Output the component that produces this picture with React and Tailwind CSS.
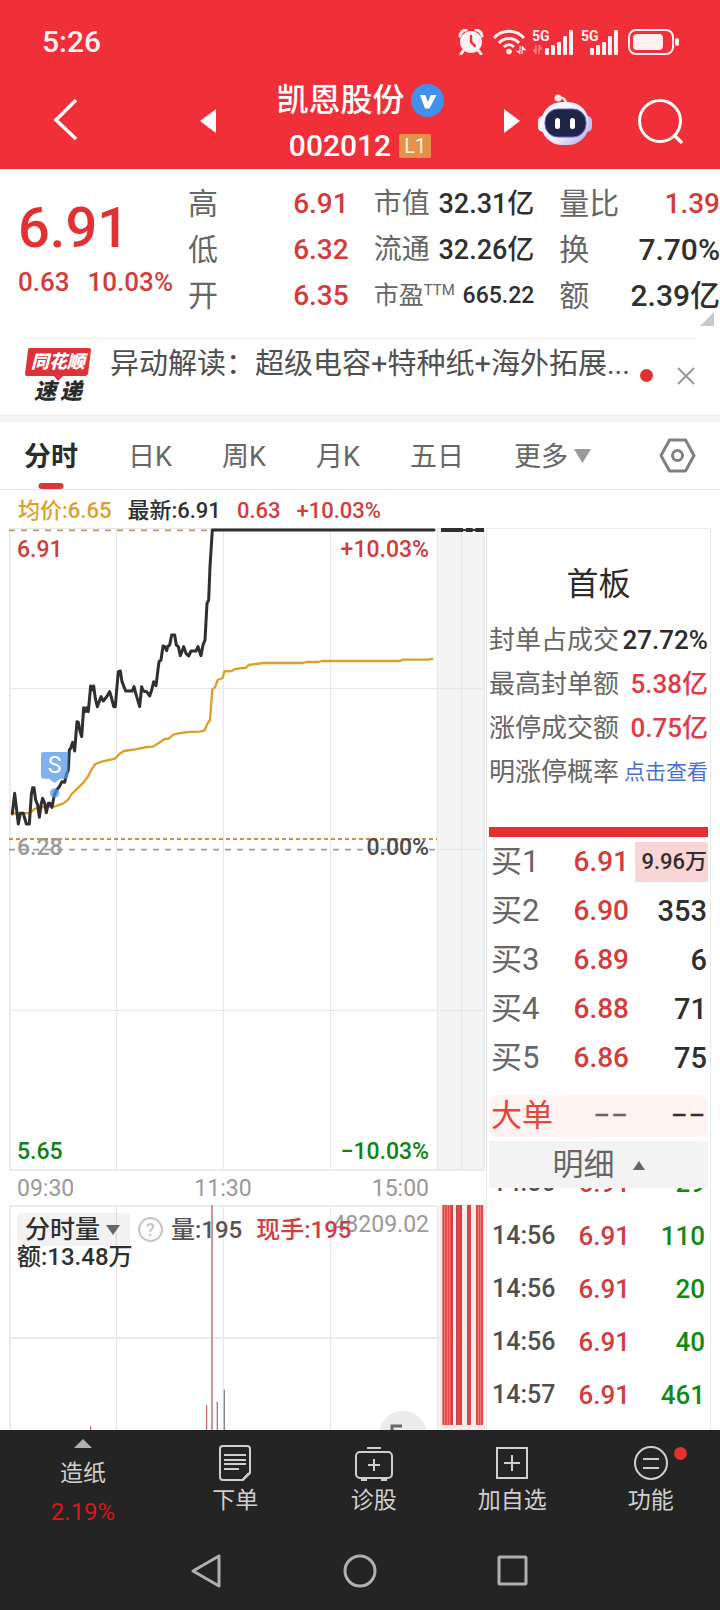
import React from "react";

const PRICE_LINE =
  "37,880 44,820 55,912 61,880 70,880 79,912 88,912 94,825 98,803 102,803 107,840 113,855 118,892 124,850 128,835 134,850 139,878 145,850 150,850 156,862 163,825 170,810 178,800 186,785 194,787 199,765 205,750 208,690 212,685 218,667 224,693 231,605 235,607 239,630 245,650 251,563 256,575 260,563 265,575 272,498 276,510 281,498 286,535 292,560 303,530 310,543 320,530 329,515 335,535 341,560 346,560 350,510 355,455 361,453 366,485 377,513 397,513 402,500 410,530 419,560 425,500 430,513 440,515 449,528 455,510 461,485 468,497 477,425 483,420 489,378 494,380 500,392 503,380 509,375 515,345 524,345 529,375 535,380 541,407 551,380 558,400 566,408 573,393 588,393 594,380 603,407 609,375 615,360 621,250 626,240 630,140 637,30 1302,30";

const AVG_LINE =
  "34,886 44,880 90,879 105,866 125,862 165,859 190,850 205,838 215,822 232,806 250,788 265,768 275,748 286,732 305,725 345,716 358,702 372,693 405,688 440,681 458,680 480,667 493,657 507,656 518,645 535,640 565,636 598,635 613,632 622,612 630,600 637,508 645,502 653,480 668,474 673,454 695,453 705,447 738,443 746,435 790,429 910,429 920,426 955,426 965,423 1200,423 1210,419 1285,419 1300,416";

const stats = [
  [
    { label: "高", value: "6.91", up: true },
    { label: "低", value: "6.32", up: true },
    { label: "开", value: "6.35", up: true },
  ],
  [
    { label: "市值", value: "32.31亿", medium: true },
    { label: "流通", value: "32.26亿", medium: true },
    { label: "市盈", sup: "TTM", value: "665.22", small: true },
  ],
  [
    { label: "量比", value: "1.39", up: true },
    { label: "换", value: "7.70%" },
    { label: "额", value: "2.39亿" },
  ],
];

const tabs = ["日K", "周K", "月K", "五日"];

const boardRows = [
  { label: "封单占成交", value: "27.72%", color: "text-[#2b2b2b]" },
  { label: "最高封单额", value: "5.38亿", color: "text-[#df3a45]" },
  { label: "涨停成交额", value: "0.75亿", color: "text-[#df3a45]" },
];

const bids = [
  ["买1", "6.91", "9.96万"],
  ["买2", "6.90", "353"],
  ["买3", "6.89", "6"],
  ["买4", "6.88", "71"],
  ["买5", "6.86", "75"],
];

const ticks = [
  ["14:56", "6.91", "29"],
  ["14:56", "6.91", "110"],
  ["14:56", "6.91", "20"],
  ["14:56", "6.91", "40"],
  ["14:57", "6.91", "461"],
];

const getValueSize = (s) => {
  if (s.small) return "text-[23px]";
  if (s.medium) return "text-[27px]";
  if (s.up) return "text-[28px]";
  return "text-[30px]";
};

const getLabelSize = (s) => {
  if (s.small) return "flex text-[25px]";
  if (s.medium) return "text-[28px]";
  return "text-[30px]";
};

function SignalIcon({ data }) {
  return (
    <svg width="43" height="28" viewBox="0 0 43 28" fill="#fff0f1">
      <text
        x="0"
        y="13"
        fontSize="14"
        fontWeight="700"
        fontFamily="Roboto, sans-serif"
      >
        5G
      </text>
      {data && (
        <path
          d="M4 17v9l-3-4h3zM7 26v-9l3 4H7z"
          fill="#ff8087"
          stroke="#ff8087"
          strokeWidth="1"
        />
      )}
      <rect x={data ? 13 : 9} y="20" width="4" height="7" rx="1" />
      <rect x={data ? 19 : 15} y="17" width="4" height="10" rx="1" />
      <rect x={data ? 25 : 21} y="14" width="4" height="13" rx="1" />
      <rect x={data ? 31 : 27} y="8" width="4" height="19" rx="1" />
      <rect x={data ? 37 : 33} y="2" width="4" height="25" rx="1" />
    </svg>
  );
}

function StatusBar() {
  return (
    <div className="flex h-[76px] items-center justify-between pt-2 pr-[40px] pl-[42px]">
      <span className="text-[30px] leading-8 font-medium text-[#fff0f1]">
        5:26
      </span>
      <div className="flex items-center">
        {/* alarm */}
        <svg width="26" height="26" viewBox="0 0 26 26" fill="#fff0f1">
          <circle cx="13" cy="13" r="11" />
          <path
            d="M2 7C2 4 5 1 8 1M24 7C24 4 21 1 18 1M5 22l-2 3M21 22l2 3"
            stroke="#fff0f1"
            strokeWidth="3"
            fill="none"
            strokeLinecap="round"
          />
          <path
            d="M13 7v6l4 4"
            stroke="#f12f38"
            strokeWidth="2.4"
            fill="none"
            strokeLinecap="round"
          />
        </svg>
        {/* wifi */}
        <svg
          className="ml-[9px]"
          width="34"
          height="26"
          viewBox="0 0 34 26"
          fill="none"
          stroke="#fff0f1"
          strokeWidth="3"
        >
          <path d="M1 9C9 0 23 0 31 9" />
          <path d="M6 14c5.500-6 14.500-6 20 0" />
          <path d="M11 18c3-3 7-3 10 0" />
          <circle cx="16" cy="22.500" r="2.800" fill="#fff0f1" stroke="none" />
          <path
            d="M27 17v8l-4-3h4zM29 25v-8l4 4h-4z"
            fill="#fff0f1"
            strokeWidth="0.600"
          />
        </svg>
        <div className="ml-[5px]">
          <SignalIcon data />
        </div>
        <div className="ml-1.5">
          <SignalIcon />
        </div>
        <svg className="ml-1" width="52" height="28" viewBox="0 0 52 28">
          <rect
            x="1"
            y="2"
            width="44"
            height="24"
            rx="7"
            fill="none"
            stroke="#fff0f1"
            strokeWidth="2"
          />
          <rect x="5" y="6" width="30" height="16" rx="4" fill="#fff0f1" />
          <rect x="47" y="10" width="4" height="8" rx="2" fill="#fff0f1" />
        </svg>
      </div>
    </div>
  );
}

function Header() {
  return (
    <header className="bg-[#f12f38] text-white">
      <StatusBar />
      <div className="flex h-[93px] items-start">
        <button
          aria-label="返回"
          className="flex h-[88px] w-[200px] items-center pl-[52px]"
        >
          <svg width="26" height="44" viewBox="0 0 26 44" fill="none">
            <path d="M24 2L4 22l20 19" stroke="#fff" strokeWidth="3.500" />
          </svg>
        </button>
        <button aria-label="上一只" className="flex h-[90px] items-center">
          <svg width="16" height="24" viewBox="0 0 16 24">
            <path d="M16 0v24L0 12z" fill="#fff" />
          </svg>
        </button>
        <div className="flex flex-1 flex-col items-center pt-px leading-[46px]">
          <h1 className="flex items-center gap-[6px] text-[32px] font-medium">
            凯恩股份
            <svg width="33" height="33" viewBox="0 0 33 33">
              <circle cx="16.500" cy="16.500" r="16.500" fill="#4390ec" />
              <path
                d="M9 11h5.500l2.200 7 3.300-7h5.500L18.500 24.500h-4.500z"
                fill="#fff"
              />
            </svg>
          </h1>
          <div className="flex items-center gap-2 text-[30px] font-medium">
            002012
            <span className="h-6 w-8 rounded-xs bg-[#e5914a] text-center text-[20px] leading-6 font-normal text-[#fff3e2]">
              L1
            </span>
          </div>
        </div>
        <button aria-label="下一只" className="flex h-[90px] items-center">
          <svg width="16" height="24" viewBox="0 0 16 24">
            <path d="M0 0v24l16-12z" fill="#fff" />
          </svg>
        </button>
        <button
          aria-label="智能助手"
          className="ml-[18px] flex h-[88px] items-center"
        >
          <svg width="54" height="52" viewBox="0 0 54 52">
            <defs>
              <linearGradient id="shell" x1="0" y1="0" x2="1" y2="1">
                <stop offset="0" stopColor="#ffffff" />
                <stop offset="0.600" stopColor="#f0e8fa" />
                <stop offset="1" stopColor="#a9a8ea" />
              </linearGradient>
            </defs>
            <path
              d="M20 4c5-1 8 1 8 6"
              stroke="#fbdfe6"
              strokeWidth="2.500"
              fill="none"
            />
            <circle cx="20" cy="4" r="3.500" fill="#ffe6ea" />
            <rect x="0" y="22" width="10" height="16" rx="5" fill="#f6eefa" />
            <rect x="44" y="22" width="10" height="16" rx="5" fill="#c3c0f0" />
            <rect
              x="3"
              y="8"
              width="48"
              height="43"
              rx="21"
              fill="url(#shell)"
            />
            <rect
              x="7"
              y="15"
              width="41"
              height="28"
              rx="13"
              fill="#1e2546"
              stroke="#6d5be0"
              strokeWidth="1"
            />
            <rect x="17" y="24" width="5" height="11" rx="2.500" fill="#fff" />
            <rect x="32" y="24" width="5" height="11" rx="2.500" fill="#fff" />
          </svg>
        </button>
        <button
          aria-label="搜索"
          className="mr-[37px] ml-[46px] flex h-[90px] items-center"
        >
          <svg
            width="45"
            height="45"
            viewBox="0 0 45 45"
            fill="none"
            stroke="#fff"
            strokeWidth="3"
          >
            <circle cx="22" cy="22" r="20.500" />
            <path d="M36 36l8 8" strokeWidth="3.500" />
          </svg>
        </button>
      </div>
    </header>
  );
}

function Quote() {
  return (
    <section className="relative grid grid-cols-[145px_1fr_1fr_1fr] gap-[25px] pt-3 pb-[19px] pl-[18px]">
      <div className="pt-[14px] font-medium whitespace-nowrap text-[#d33b3b]">
        <div className="text-[56px] leading-[66px] text-[#e13132]">6.91</div>
        <div className="flex gap-[18px] text-[26px] leading-[42px]">
          <span>0.63</span>
          <span>10.03%</span>
        </div>
      </div>
      {stats.map((col, i) => (
        <dl key={i} className="leading-[46px] whitespace-nowrap">
          {col.map((s) => (
            <div key={s.label} className="flex h-[46px] justify-between">
              <dt className={`text-[#666] ${getLabelSize(s)}`}>
                {s.label}
                {s.sup && (
                  <span className="text-[15px] leading-[34px]">{s.sup}</span>
                )}
              </dt>
              <dd
                className={`font-medium ${getValueSize(s)} ${
                  s.up ? "text-[#d33b3b]" : "text-[#2f2f2f]"
                }`}
              >
                {s.value}
              </dd>
            </div>
          ))}
        </dl>
      ))}
      <svg
        className="absolute right-[6px] bottom-3"
        width="14"
        height="14"
        viewBox="0 0 14 14"
      >
        <path d="M14 0v14H0z" fill="#c8c8c8" />
      </svg>
    </section>
  );
}

function NewsBar() {
  return (
    <section className="mx-[25px] flex h-[76px] items-start border-t border-[#ebebeb]">
      <div className="mt-[9px] w-[66px] shrink-0">
        <div className="relative">
          <svg
            className="block"
            width="66"
            height="33"
            viewBox="0 0 66 33"
            aria-hidden="true"
          >
            <path
              d="M5 0h59q2 0 2 2l-3 24q-1 2-3 2H38l-5 5-4-5H2q-2 0-2-2L3 2q0-2 2-2z"
              fill="#e13136"
            />
          </svg>
          <span className="absolute inset-x-0 top-0 text-center text-[18px] leading-7 font-black text-white italic">
            同花顺
          </span>
        </div>
        <div className="flex justify-center gap-1 text-[22px] leading-[22px] font-black text-[#2b2b2b] italic">
          <span>速</span>
          <span>递</span>
        </div>
      </div>
      <p className="ml-[19px] min-w-0 flex-1 text-[29px] leading-[51px] whitespace-nowrap text-[#4f4f4f]">
        异动解读：超级电容+特种纸+海外拓展...
      </p>
      <span className="mt-[30px] ml-2 size-[13px] shrink-0 rounded-full bg-[#e5302f]" />
      <button aria-label="关闭" className="mt-[28px] ml-6 shrink-0">
        <svg width="18" height="18" viewBox="0 0 18 18">
          <path d="M1 1l16 16M17 1L1 17" stroke="#999" strokeWidth="2" />
        </svg>
      </button>
    </section>
  );
}

function Tabs() {
  return (
    <nav className="flex h-[68px] items-center justify-between border-b border-[#e6e6e6] pr-6 pl-6 text-[27px] text-[#666]">
      <button className="relative h-full pt-[3px] font-bold text-[#2b2b2b]">
        分时
        <span className="absolute bottom-0 left-1/2 h-[6px] w-[25px] -translate-x-1/2 rounded-full bg-[#d93737]" />
      </button>
      {tabs.map((t) => (
        <button key={t} className="h-full pt-[3px]">
          {t}
        </button>
      ))}
      <button className="flex h-full items-center gap-[6px] pt-[3px]">
        更多
        <svg
          className="-mt-[3px]"
          width="17"
          height="14"
          viewBox="0 0 17 14"
        >
          <path d="M0 0h17L8.500 14z" fill="#999" />
        </svg>
      </button>
      <button aria-label="设置" className="ml-[18px]">
        <svg
          width="37"
          height="35"
          viewBox="0 0 37 35"
          fill="none"
          stroke="#808080"
          strokeWidth="3"
          strokeLinejoin="round"
        >
          <path d="M10.500 2h16l8.500 15.500L26.500 33h-16L2 17.500z" />
          <circle cx="18.500" cy="17.500" r="5" />
        </svg>
      </button>
    </nav>
  );
}

function PriceChart() {
  return (
    <div className="relative text-[23px] leading-7 font-medium">
      <svg
        className="block h-[643px] w-full"
        viewBox="27 24 1428 1929"
        preserveAspectRatio="none"
        fill="none"
      >
        <rect x="1318" y="24" width="137" height="1929" fill="#f4f4f4" />
        {/* grid */}
        <g stroke="#e3e3e3" strokeWidth="3">
          <path d="M349 24v1929M670 24v1929M992 24v1929M1385 24v1929" />
          <path d="M27 506h1428M1315 988h140M27 1471h1428" />
        </g>
        <g stroke="#ebebeb" strokeWidth="6">
          <path d="M30 24v1929M1313 24v1929M1453 24v1929M27 1950h1428" />
        </g>
        <path d="M27 26h1428" stroke="#e6e6e6" strokeWidth="4" />
        <path
          d="M27 31h610"
          stroke="#b89d72"
          strokeWidth="5"
          strokeDasharray="18 18"
        />
        <path
          d="M27 957h1284"
          stroke="#d98a45"
          strokeWidth="6"
          strokeDasharray="12 9"
        />
        <path
          d="M27 989h1278"
          stroke="#9d9d9d"
          strokeWidth="5"
          strokeDasharray="18 18"
        />
        <polyline
          points={AVG_LINE}
          stroke="#dca02a"
          strokeWidth="7"
          strokeLinejoin="round"
        />
        <polyline
          points={PRICE_LINE}
          stroke="#2f2f2f"
          strokeWidth="9"
          strokeLinejoin="round"
          strokeLinecap="round"
        />
        <path
          d="M1323 30h66M1398 30h20M1426 30h26"
          stroke="#2f2f2f"
          strokeWidth="12"
        />
        <path d="M1323 30h128" stroke="#2f2f2f" strokeWidth="6" />
        {/* sell marker */}
        <g fill="#4b93ea" fillOpacity="0.720">
          <path d="M130 696h68q7 0 7 7v66q0 7-7 7h-17l-17 13-17-13h-17q-7 0-7-7v-66q0-7 7-7z" />
          <circle cx="164" cy="819" r="14" />
        </g>
      </svg>
      <span className="absolute top-[224px] left-8 w-[27px] text-center font-normal text-white">
        S
      </span>
      <span className="absolute top-2 left-2 text-[#d23c3c]">6.91</span>
      <span className="absolute top-2 right-[56px] text-[#d23c3c]">
        +10.03%
      </span>
      <span className="absolute top-[306px] left-2 text-[#9a9a9a]">6.28</span>
      <span className="absolute top-[306px] right-[56px] text-[#4a4a4a]">
        0.00%
      </span>
      <span className="absolute bottom-[5px] left-2 text-[#118311]">5.65</span>
      <span className="absolute right-[56px] bottom-[5px] text-[#118311]">
        −10.03%
      </span>
    </div>
  );
}

function VolumeChart() {
  return (
    <div className="relative text-[24px] leading-7 font-medium">
      <svg
        className="block h-[225px] w-full"
        viewBox="27 225 1428 675"
        preserveAspectRatio="none"
        fill="none"
      >
        <rect x="1318" y="225" width="137" height="675" fill="#fcebeb" />
        <g stroke="#e3e3e3" strokeWidth="3">
          <path d="M349 225v675M670 225v675M992 225v675M1385 225v675" />
        </g>
        <g stroke="#ebebeb" strokeWidth="6">
          <path d="M30 225v675M1313 225v675M1453 225v675M27 228h1286M27 624h1428" />
        </g>
        <path d="M272 889v11M620 825v75" stroke="#c04a4a" strokeWidth="3" />
        <path d="M636 225v675" stroke="#c98080" strokeWidth="5" />
        <path d="M652 815v85M673 779v121" stroke="#888" strokeWidth="4" />
        <g fill="#e34444">
          <path d="M1327 225h32v660h-32zM1368 225h18v660h-18zM1401 225h12v660h-12zM1428 225h21v660h-21z" />
        </g>
        <path
          d="M1334 225v660M1342 225v660M1349 225v660M1435 225v660M1442 225v660"
          stroke="#f7a5a5"
          strokeWidth="2"
        />
        <path
          d="M1357 225v660M1370 225v660M1384 225v660M1404 225v660"
          stroke="#b84a4e"
          strokeWidth="3"
        />
      </svg>
      <span className="absolute top-[6px] right-[56px] text-[23px] font-normal text-[#999]">
        48209.02
      </span>
      <div className="absolute top-2 left-2 flex items-center gap-2 whitespace-nowrap">
        <label className="relative">
          <select
            aria-label="指标"
            className="h-[33px] w-[113px] appearance-none rounded-sm bg-black/5 pl-2 text-[25px] leading-[33px] text-[#2f2f2f]"
          >
            <option>分时量</option>
          </select>
          <svg
            className="pointer-events-none absolute top-3 right-[10px]"
            width="14"
            height="10"
            viewBox="0 0 14 10"
          >
            <path d="M0 0h14L7 10z" fill="#666" />
          </svg>
        </label>
        <button
          aria-label="说明"
          className="size-[25px] rounded-full border-2 border-[#c4c4c4] text-center text-[18px] leading-[21px] text-[#c4c4c4]"
        >
          ?
        </button>
        <span className="text-[#555]">量:195</span>
        <span className="ml-[6px] text-[#d23c3c]">现手:195</span>
      </div>
      <span className="absolute top-[38px] left-2 text-[#2f2f2f]">
        额:13.48万
      </span>
      <button
        aria-label="展开"
        className="absolute top-[206px] right-[58px] size-12 rounded-full bg-[#ebebeb]"
      >
        <svg
          className="absolute top-[13px] left-[11px]"
          width="26"
          height="24"
          viewBox="0 0 26 24"
          fill="none"
          stroke="#666"
          strokeWidth="3"
        >
          <path d="M12 2H2v10M14 22h10V12" />
        </svg>
      </button>
    </div>
  );
}

function SidePanel() {
  return (
    <aside className="w-[225px] shrink-0 overflow-hidden border-x border-t border-[#ebebeb] px-[2px]">
      <h2 className="pt-[31px] text-center text-[32px] leading-[48px] text-[#2b2b2b]">
        首板
      </h2>
      <dl className="mt-[10px] leading-[44px] whitespace-nowrap">
        {boardRows.map((r) => (
          <div key={r.label} className="flex h-[44px] justify-between">
            <dt className="text-[26px] text-[#666]">{r.label}</dt>
            <dd className={`text-[26px] font-medium ${r.color}`}>{r.value}</dd>
          </div>
        ))}
        <div className="flex h-[44px] justify-between">
          <dt className="text-[26px] text-[#666]">明涨停概率</dt>
          <dd className="text-[21px] text-[#4a6fd0]">
            <a href="#probability">点击查看</a>
          </dd>
        </div>
      </dl>
      <div className="mt-[33px] h-[10px] bg-[#e5302f]" />
      <table className="w-full table-fixed">
        <tbody>
          {bids.map(([label, price, vol], i) => (
            <tr key={label} className="h-[49px] font-medium">
              <th
                scope="row"
                className="w-[73px] pl-[2px] text-left text-[31px] leading-10 font-normal text-[#666]"
              >
                {label}
              </th>
              <td className="w-[67px] text-right text-[28px] leading-10 text-[#d23c3c]">
                {price}
              </td>
              <td className="pl-[6px] text-right text-[29px] leading-10 text-[#2f2f2f]">
                {i === 0 ? (
                  <span className="block bg-[#f9d5d5] pr-px text-[22px]">
                    {vol}
                  </span>
                ) : (
                  <span className="pr-px">{vol}</span>
                )}
              </td>
            </tr>
          ))}
        </tbody>
      </table>
      <div className="mt-[13px] flex h-[42px] items-center rounded-lg bg-[#fff3f2] px-[2px] text-[31px] leading-[42px]">
        <span className="flex-1 text-[#e2463c]">大单</span>
        <span className="text-[#666]">−−</span>
        <span className="ml-[42px] text-[#2f2f2f]">−−</span>
      </div>
      <button className="mt-1 flex h-[47px] w-full items-center justify-center gap-[18px] bg-[#f3f3f3] pt-[2px] text-[31px] text-[#666]">
        明细
        <svg width="12" height="9" viewBox="0 0 12 9">
          <path d="M6 0l6 9H0z" fill="#666" />
        </svg>
      </button>
      <div className="overflow-hidden">
        <table className="-mt-8 w-full table-fixed text-[26px] leading-8 font-medium">
          <tbody>
            {ticks.map(([time, price, vol], i) => (
              <tr key={i} className="h-[53px]">
                <td className="w-[76px] pl-[3px] text-[25px] text-[#4f4f4f]">
                  {time}
                </td>
                <td className="w-[65px] text-right text-[#d23c3c]">{price}</td>
                <td className="pr-[3px] text-right text-[#118a11]">{vol}</td>
              </tr>
            ))}
          </tbody>
        </table>
      </div>
    </aside>
  );
}

function BottomNav() {
  return (
    <footer className="shrink-0 bg-[#242424] text-[#cfcfcf]">
      <nav className="flex h-[100px] text-[23px] leading-8">
        <button className="flex w-[166px] flex-col items-center pt-[9px]">
          <svg width="18" height="9" viewBox="0 0 18 9">
            <path d="M9 0l9 9H0z" fill="#b0b0b0" />
          </svg>
          <span className="mt-[10px]">造纸</span>
          <span className="mt-[6px] text-[24px] text-[#d81818]">2.19%</span>
        </button>
        <button className="flex flex-1 flex-col items-center gap-1 pt-[15px]">
          <svg
            width="36"
            height="36"
            viewBox="0 0 36 36"
            fill="none"
            stroke="#cfcfcf"
            strokeWidth="2"
          >
            <path d="M6 1h24q3 0 3 3v24l-7 7H6q-3 0-3-3V4q0-3 3-3z" />
            <path d="M7 10h22M7 15h22M7 19h22M7 24h15" />
            <path d="M33 28l-7 7v-2l5-5z" strokeWidth="1" />
          </svg>
          下单
        </button>
        <button className="flex flex-1 flex-col items-center gap-1 pt-[15px]">
          <svg
            width="38"
            height="36"
            viewBox="0 0 38 36"
            fill="none"
            stroke="#cfcfcf"
            strokeWidth="2"
          >
            <rect x="1" y="7" width="36" height="26" rx="4" />
            <path d="M12 3h14M19 14v12M13 20h12" />
            <path d="M6 35h6M26 35h6" />
          </svg>
          诊股
        </button>
        <button className="flex flex-1 flex-col items-center gap-1 pt-[15px]">
          <svg
            width="36"
            height="36"
            viewBox="0 0 36 36"
            fill="none"
            stroke="#cfcfcf"
            strokeWidth="2"
          >
            <rect x="3" y="3" width="30" height="30" />
            <path d="M18 10v16M10 18h16" />
          </svg>
          加自选
        </button>
        <button className="flex flex-1 flex-col items-center gap-1 pt-[15px]">
          <span className="relative h-9">
            <svg
              width="36"
              height="36"
              viewBox="0 0 36 36"
              fill="none"
              stroke="#cfcfcf"
              strokeWidth="2"
            >
              <circle cx="18" cy="18" r="16" />
              <path d="M10 14h16M10 23h16" />
            </svg>
            <span className="absolute top-[2px] -right-[18px] size-[13px] rounded-full bg-[#e5302f]" />
          </span>
          功能
        </button>
      </nav>
      <div className="flex h-20 items-center justify-center gap-[118px] pt-[2px]">
        <button aria-label="后退">
          <svg
            width="36"
            height="36"
            viewBox="0 0 36 36"
            fill="none"
            stroke="#b0b0b0"
            strokeWidth="3"
            strokeLinejoin="round"
          >
            <path d="M31 3v30L5 18z" />
          </svg>
        </button>
        <button aria-label="主页">
          <svg
            width="36"
            height="36"
            viewBox="0 0 36 36"
            fill="none"
            stroke="#b0b0b0"
            strokeWidth="3"
          >
            <circle cx="18" cy="18" r="15" />
          </svg>
        </button>
        <button aria-label="最近任务">
          <svg
            width="36"
            height="36"
            viewBox="0 0 36 36"
            fill="none"
            stroke="#b0b0b0"
            strokeWidth="3"
            strokeLinejoin="round"
          >
            <rect x="3" y="4" width="27" height="27" rx="1" />
          </svg>
        </button>
      </div>
    </footer>
  );
}

export default function App() {
  return (
    <div className="flex h-screen flex-col overflow-hidden bg-white font-[Roboto,'Noto_Sans_CJK_SC',sans-serif]">
      <Header />
      <Quote />
      <NewsBar />
      <div className="h-2 shrink-0 bg-[#f4f4f4]" />
      <Tabs />
      <main className="min-h-0 flex-1 overflow-hidden">
        <div className="flex h-[38px] items-center gap-4 pt-[2px] pl-[18px] text-[22px] font-medium">
          <span className="text-[#dca02a]">均价:6.65</span>
          <span className="text-[#2f2f2f]">最新:6.91</span>
          <span className="text-[#d23c3c]">0.63</span>
          <span className="text-[#d23c3c]">+10.03%</span>
        </div>
        <div className="flex gap-px pr-[9px] pl-[9px]">
          <div className="min-w-0 flex-1">
            <PriceChart />
            <div className="flex h-[34px] items-center justify-between pt-[2px] pr-[56px] pl-2 text-[23px] text-[#999]">
              <span>09:30</span>
              <span>11:30</span>
              <span>15:00</span>
            </div>
            <VolumeChart />
          </div>
          <SidePanel />
        </div>
      </main>
      <BottomNav />
    </div>
  );
}
